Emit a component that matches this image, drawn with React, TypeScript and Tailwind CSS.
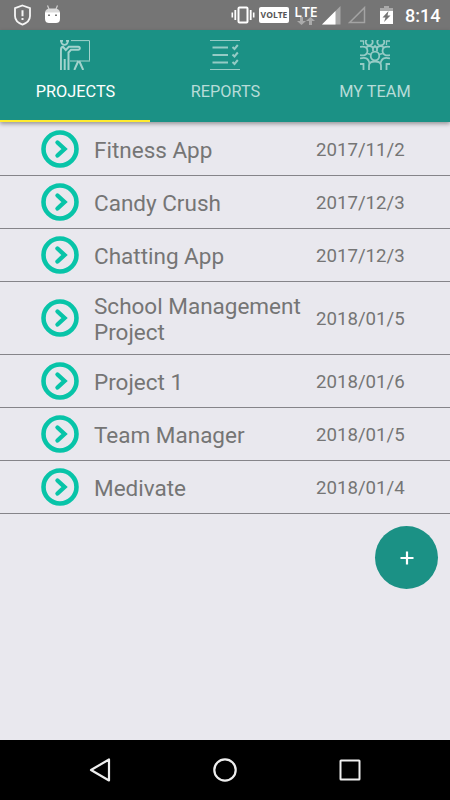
type Project = {
  name: string;
  date: string;
};

const projects: Project[] = [
  { name: "Fitness App", date: "2017/11/2" },
  { name: "Candy Crush", date: "2017/12/3" },
  { name: "Chatting App", date: "2017/12/3" },
  { name: "School Management Project", date: "2018/01/5" },
  { name: "Project 1", date: "2018/01/6" },
  { name: "Team Manager", date: "2018/01/5" },
  { name: "Medivate", date: "2018/01/4" },
];

function StatusBar() {
  return (
    <div className="flex h-[30px] shrink-0 items-center bg-[#757575] text-white">
      <svg className="ml-[13px] h-[22px] w-[19px]" viewBox="0 0 19 22" fill="none" stroke="#f5f5f5">
        <path d="M9.5 1.5 17 4.2V12c0 4-3.2 7-7.5 8.6C5.2 19 2 16 2 12V4.2Z" strokeWidth="1.8" />
        <path d="M9.5 6.2v6M9.5 14v2" strokeWidth="2" />
      </svg>
      <svg className="ml-[12px] h-[20px] w-[17px]" viewBox="0 0 17 20">
        <path d="M3.500 .5 5 4M13.500 .5 12 4" stroke="#d0d0d0" strokeWidth="1.2" />
        <path d="M1 8c0-3 2-4.500 5-4.500h5c3 0 5 1.500 5 4.500Z" fill="#dadada" />
        <path d="M1 7.500h15V14c0 3-2 4-4 4H5c-2 0-4-1-4-4Z" fill="#fff" />
        <path d="M4 9.500h2v1.500H4zM11 9.500h2v1.500h-2z" fill="#777" />
      </svg>
      <svg className="ml-[170px] h-[18px] w-[24px]" viewBox="0 0 24 18" fill="none" stroke="#fff">
        <rect x="7.500" y="1.500" width="9" height="15" rx="1" strokeWidth="2" />
        <path d="M4.300 4v10M19.700 4v10" strokeWidth="1.800" />
        <path d="M1.300 6.500v5M22.700 6.500v5" strokeWidth="1.600" />
      </svg>
      <span className="ml-[4px] flex h-[16px] w-[30px] items-center justify-center rounded-[2px] bg-white font-['Open_Sans',sans-serif] text-[8.5px] font-bold text-[#555]">
        VOLTE
      </span>
      <div className="ml-[6px] flex h-[20px] w-[22px] flex-col items-center">
        <span className="h-[12px] pt-px font-['Open_Sans',sans-serif] text-[14px] leading-[12px] font-semibold">LTE</span>
        <svg className="h-[8px] w-[18px] shrink-0" viewBox="0 0 18 8" fill="#aaa">
          <path d="M3 0h3v4h3L4.5 8 0 4h3zM12 8h3V4h3L13.5 0 9 4h3z" />
        </svg>
      </div>
      <svg className="ml-[4px] h-[20px] w-[20px]" viewBox="0 0 20 20">
        <path d="M1 19.500 19.500 1v18.500Z" fill="#a6a6a6" />
        <path d="M1 19.500 14.500 6v13.500Z" fill="#fff" />
      </svg>
      <svg className="ml-[7px] h-[18px] w-[18px]" viewBox="0 0 18 18" fill="none" stroke="#a3a3a3" strokeWidth="1.500">
        <path d="M1.600 16.500 16.500 1.600v14.900Z" />
      </svg>
      <svg className="ml-[14px] h-[18px] w-[13px]" viewBox="0 0 13 18">
        <path d="M4 0h5v2h4v3H0V2h4Z" fill="#a9a9a9" />
        <path d="M0 5h13v13H0Z" fill="#fff" />
        <path d="m8.500 5-6 6.500h3L4 16l6.500-6.500h-3Z" fill="#757575" />
      </svg>
      <span className="ml-[12px] pt-px text-[18px] leading-[30px] font-medium whitespace-nowrap">8:14</span>
    </div>
  );
}

function ProjectsIcon() {
  return (
    <svg className="h-[30px] w-[30px]" viewBox="0 0 30 30" fill="none" stroke="#a3d3cd">
      <path d="M11 .6h18.500v20M10 21h20" strokeWidth="1" />
      <path d="m18.300 21-4 9M19.200 21l4 9" strokeWidth="2" />
      <path d="M1.200 0v1.500a3.300 3.300 0 0 0 6.600 0V0M0 .8h3M6 .8h3" strokeWidth="1.800" />
      <path d="M.9 30V10.500C.9 8 1.500 6.800 3 6.800L5.800 10l3-3.200h9.500a1.500 1.500 0 0 1 0 3H11L8.500 12.500V30M4.700 19v11" strokeWidth="2" />
    </svg>
  );
}

function ReportsIcon() {
  return (
    <svg className="h-[30px] w-[30px]" viewBox="0 0 30 30" fill="none" stroke="#95cbc5">
      <path d="M0 .5h30M0 29.500h30" strokeWidth="1" />
      <path d="M2.500 7.500h15.500M2.500 15h15.500M2.500 22.500h15.500" strokeWidth="2" />
      <path d="m22.500 7 2 2 3.300-4M22.500 14.500l2 2 3.300-4M22.500 22l2 2 3.300-4" strokeWidth="2" />
    </svg>
  );
}

function TeamIcon() {
  return (
    <svg className="h-[30px] w-[30px]" viewBox="0 0 30 30" fill="none" stroke="#95cbc5" strokeWidth="1.800">
      <circle cx="15" cy="16" r="4.300" />
      <circle cx="9.200" cy="2" r="3.500" />
      <circle cx="20.800" cy="2" r="3.500" />
      <path d="M0 7c5-1.500 7.500 1 7.500 4S4.500 16.500 0 15M30 7c-5-1.500-7.500 1-7.500 4s3 5.500 7.500 4" />
      <path d="M6 8c1.500-2.500 6.500-2.500 7 .5v3M24 8c-1.500-2.500-6.500-2.500-7 .5v3M13 8l2-2 2 2" />
      <path d="M0 1h3.500v4M30 1h-3.500v4" strokeWidth="1.300" />
      <path d="M9 30v-4.500c0-2.500 2.500-4 6-4s6 1.500 6 4V30" />
      <path d="M0 18.500c5-1.500 7.500 0 8.500 2l1 2.500M30 18.500c-5-1.500-7.500 0-8.500 2l-1 2.500M0 24h3.500v6M30 24h-3.500v6M7.500 13.500l3.500 1M22.500 13.500l-3.500 1" />
    </svg>
  );
}

function Tabs() {
  return (
    <div className="relative z-10 grid h-[92px] shrink-0 grid-cols-3 bg-[#1b9185] text-[16.3px] leading-5 text-[#b7dcd8] shadow-[0_2px_4px_rgba(0,0,0,0.35)]">
      <div className="flex flex-col items-center border-b-2 border-[#ffeb2f] pt-[10px] text-white">
        <ProjectsIcon />
        <span className="mt-[12px] pl-px">PROJECTS</span>
      </div>
      <div className="flex flex-col items-center pt-[10px]">
        <ReportsIcon />
        <span className="mt-[12px] pl-px">REPORTS</span>
      </div>
      <div className="flex flex-col items-center pt-[10px]">
        <TeamIcon />
        <span className="mt-[12px]">MY TEAM</span>
      </div>
    </div>
  );
}

function ProjectRow({ name, date }: Project) {
  return (
    <div className="flex min-h-[53px] items-center border-b border-[#858489] pl-[41px] text-[#757575] first:min-h-[54px]">
      <svg className="h-[38px] w-[38px] shrink-0" viewBox="0 0 38 38" fill="none" stroke="#08c4a8">
        <circle cx="19" cy="19" r="16.500" strokeWidth="4.600" />
        <path d="m16.500 12.500 7 6.500-7 6.500" strokeWidth="4.400" strokeLinecap="round" />
      </svg>
      <span className="ml-[15px] w-[222px] pt-[11px] pr-3 pb-[9px] text-[22.5px] leading-[26px]">{name}</span>
      <span className="pt-[2px] text-[18.65px] leading-6">{date}</span>
    </div>
  );
}

function NavigationBar() {
  return (
    <div className="flex h-[60px] shrink-0 items-center justify-between bg-black px-[87px]">
      <svg className="h-[26px] w-[26px]" viewBox="0 0 26 26" fill="none" stroke="#eee" strokeWidth="2.200">
        <path d="M22 2.500v21L4 13Z" strokeLinejoin="round" />
      </svg>
      <svg className="h-[26px] w-[26px]" viewBox="0 0 26 26" fill="none" stroke="#eee" strokeWidth="2.200">
        <circle cx="13" cy="13" r="10.700" />
      </svg>
      <svg className="h-[26px] w-[26px]" viewBox="0 0 26 26" fill="none" stroke="#eee" strokeWidth="2">
        <rect x="3.500" y="3.500" width="19" height="19" rx=".5" />
      </svg>
    </div>
  );
}

export default function App() {
  return (
    <div className="flex h-[800px] w-[450px] flex-col overflow-hidden bg-[#e9e8ee] font-[Roboto,sans-serif]">
      <StatusBar />
      <Tabs />
      <main className="flex flex-1 flex-col">
        {projects.map((project) => (
          <ProjectRow key={project.name} name={project.name} date={project.date} />
        ))}
        <button
          type="button"
          aria-label="Add project"
          className="mt-[12px] mr-[12px] flex h-[63px] w-[63px] items-center justify-center self-end rounded-full bg-[#1b9185]"
        >
          <svg className="h-[14px] w-[14px]" viewBox="0 0 14 14" stroke="#fff" strokeWidth="2.200">
            <path d="M7 .5v13M.5 7h13" />
          </svg>
        </button>
      </main>
      <NavigationBar />
    </div>
  );
}
